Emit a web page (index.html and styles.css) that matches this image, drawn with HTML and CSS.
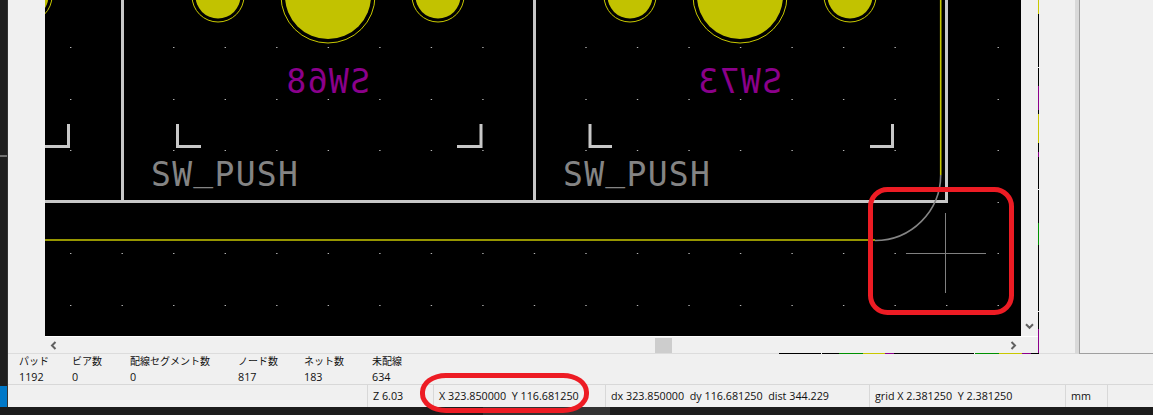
FILE: index.html
```html
<!DOCTYPE html>
<html lang="ja">
<head>
<meta charset="utf-8">
<title>PCB</title>
<link rel="stylesheet" href="styles.css">
</head>
<body>
<div class="app">
  <div class="main">
    <div class="rail">
      <div class="rail-top"></div>
      <div class="rail-line"></div>
      <div class="rail-fill"></div>
      <div class="rail-blue"></div>
    </div>
    <div class="content">
      <div class="top">
        <div class="work">
          <div class="work-main">
            <div class="gutter"></div>
            <div class="view">
              <div class="view-row">
                <svg class="canvas" viewBox="45 0 976 336" width="976" height="336" xmlns="http://www.w3.org/2000/svg">
                  <rect x="45" y="0" width="976" height="336" fill="#000"/>
                  <g class="dots">
                    <line x1="70" x2="1010" y1="47.5" y2="47.5"/>
                    <line x1="70" x2="1010" y1="99.5" y2="99.5"/>
                    <line x1="70" x2="1010" y1="150.5" y2="150.5"/>
                    <line x1="70" x2="1010" y1="202.5" y2="202.5"/>
                    <line x1="70" x2="1010" y1="253.5" y2="253.5"/>
                    <line x1="70" x2="1010" y1="305.5" y2="305.5"/>
                  </g>
                  <g class="pad">
                    <circle cx="26" cy="-4" r="22.5"/>
                    <circle cx="218" cy="-4" r="22.5"/>
                    <circle cx="328" cy="-4" r="43"/>
                    <circle cx="438" cy="-4" r="22.5"/>
                    <circle cx="630" cy="-4" r="22.5"/>
                    <circle cx="740" cy="-4" r="43"/>
                    <circle cx="850" cy="-4" r="22.5"/>
                  </g>
                  <g class="pad-ring">
                    <circle cx="26" cy="-4" r="26"/>
                    <circle cx="218" cy="-4" r="26"/>
                    <circle cx="328" cy="-4" r="47"/>
                    <circle cx="438" cy="-4" r="26"/>
                    <circle cx="630" cy="-4" r="26"/>
                    <circle cx="740" cy="-4" r="47"/>
                    <circle cx="850" cy="-4" r="26"/>
                  </g>
                  <g class="fab">
                    <path d="M122.5 0V201M534.5 0V201M946.5 0V201.5H45"/>
                    <path d="M45 146.5H68.5V124"/>
                    <path d="M177.5 124V146.5H201"/>
                    <path d="M457 146.5H481V124"/>
                    <path d="M590 124V146.5H612"/>
                    <path d="M870 146.5H892.5V124"/>
                  </g>
                  <path class="edge" d="M940.7 0V175M45 240H875"/>
                  <path class="arc" d="M940.7 175A65.7 65.7 0 0 1 875 240.5"/>
                  <text class="ref" transform="translate(370 93) scale(-1 1)">SW68</text>
                  <text class="ref" transform="translate(782 93) scale(-1 1)">SW73</text>
                  <text class="value" x="151" y="186">SW<tspan dy="-6">_</tspan><tspan dy="6">PUSH</tspan></text>
                  <text class="value" x="563" y="186">SW<tspan dy="-6">_</tspan><tspan dy="6">PUSH</tspan></text>
                  <path class="cross" d="M906 253.5H986M945.5 213V293"/>
                  <rect class="mark" x="870.5" y="189.5" width="141" height="123" rx="17" ry="17"/>
                </svg>
                <div class="vscroll">
                  <svg class="chev" viewBox="0 0 9 7" width="9" height="7"><path d="M1 1.2L4.5 4.8L8 1.2"/></svg>
                </div>
              </div>
              <div class="hscroll">
                <svg class="chev" viewBox="0 0 7 9" width="7" height="9"><path d="M5.5 1L2 4.5L5.5 8"/></svg>
                <div class="track"><div class="thumb"></div></div>
                <svg class="chev" viewBox="0 0 7 9" width="7" height="9"><path d="M1.5 1L5 4.5L1.5 8"/></svg>
              </div>
            </div>
            <div class="ticks">
              <i class="t-yellow t14"></i><i class="t-black t53"></i><i class="t-white t1"></i><i class="t-black t18"></i>
              <i class="t-purple t24"></i><i class="t-black t4"></i><i class="t-yellow t29"></i><i class="t-black t9"></i>
              <i class="t-purple t5"></i><i class="t-black t32"></i><i class="t-white t1"></i><i class="t-black t33"></i>
              <i class="t-green t22"></i><i class="t-black t66"></i><i class="t-white t1"></i><i class="t-black t17"></i>
              <i class="t-purple t24"></i>
            </div>
            <div class="gap"></div>
          </div>
          <div class="rule">
            <div class="rule-start"></div>
            <i class="s-black w42"></i><i class="s-white w1"></i><i class="s-black w17"></i><i class="s-green w24"></i>
            <i class="s-yellow w22"></i><i class="s-purple w9"></i><i class="s-black w80"></i><i class="s-white w1"></i>
            <i class="s-green w24"></i><i class="s-yellow w23"></i><i class="s-purple w9"></i><i class="s-black w8"></i>
          </div>
        </div>
        <div class="sash"></div>
        <div class="side"></div>
      </div>
      <div class="messages">
        <div class="msg w-pad"><span class="label">パッド</span><span class="num">1192</span></div>
        <div class="msg w-via"><span class="label">ビア数</span><span class="num">0</span></div>
        <div class="msg w-seg"><span class="label">配線セグメント数</span><span class="num">0</span></div>
        <div class="msg w-node"><span class="label">ノード数</span><span class="num">817</span></div>
        <div class="msg w-net"><span class="label">ネット数</span><span class="num">183</span></div>
        <div class="msg"><span class="label">未配線</span><span class="num">634</span></div>
      </div>
      <div class="status">
        <div class="cell c-blank"></div>
        <div class="cell c-zoom">Z 6.03</div>
        <div class="cell c-xy">X 323.850000&nbsp; Y 116.681250</div>
        <div class="cell c-dx">dx 323.850000&nbsp; dy 116.681250&nbsp; dist 344.229</div>
        <div class="cell c-grid">grid X 2.381250&nbsp; Y 2.381250</div>
        <div class="cell c-unit">mm</div>
      </div>
      <div class="callout"></div>
    </div>
  </div>
  <div class="taskbar">
    <div class="task-a"></div>
    <div class="task-b"></div>
  </div>
</div>
</body>
</html>
```
FILE: styles.css
```css
* { box-sizing: border-box; }
html, body { margin: 0; padding: 0; }
body {
  width: 1153px;
  height: 415px;
  overflow: hidden;
  background: #f0f0f0;
  font-family: "Open Sans", "Noto Sans CJK JP", sans-serif;
  font-size: 10.75px;
  color: #111;
}
.app { display: flex; flex-direction: column; height: 415px; }
.main { display: flex; height: 407px; }
.rail { width: 8px; display: flex; flex-direction: column; background: #1f1f1f; border-right: 1px solid #333; }
.rail-top { height: 155px; }
.rail-line { height: 2px; background: #707070; }
.rail-fill { flex: 1; }
.rail-blue { height: 21px; background: #0078c8; }
.content { flex: 1; display: flex; flex-direction: column; position: relative; }
.top { display: flex; height: 354px; }
.work { width: 1067px; display: flex; flex-direction: column; }
.work-main { display: flex; height: 353px; }
.gutter { width: 37px; }
.view { width: 993px; display: flex; flex-direction: column; }
.view-row { display: flex; height: 336px; }
.canvas { display: block; flex: none; }
.vscroll { width: 17px; display: flex; align-items: flex-end; justify-content: center; padding-bottom: 6px; }
.chev { display: block; flex: none; }
.chev path { fill: none; stroke: #606060; stroke-width: 2; }
.hscroll { height: 17px; display: flex; align-items: center; padding: 0 21px 0 5px; border-top: 1px solid #fff; }
.track { flex: 1; display: flex; padding-left: 598px; }
.thumb { width: 17px; height: 15px; background: #cdcdcd; }
.ticks { width: 1px; display: flex; flex-direction: column; }
.ticks i { display: block; flex: none; }
.gap { flex: 1; }
.t-yellow { background: #c8c800; }
.t-black { background: #000; }
.t-white { background: #f0f0f0; }
.t-purple { background: #8b008b; }
.t-green { background: #009000; }
.t1 { height: 1px; } .t4 { height: 4px; } .t5 { height: 5px; } .t9 { height: 9px; }
.t14 { height: 14px; } .t17 { height: 17px; } .t18 { height: 18px; } .t22 { height: 22px; }
.t24 { height: 24px; } .t29 { height: 29px; } .t32 { height: 32px; } .t33 { height: 33px; }
.t53 { height: 53px; } .t66 { height: 66px; }
.rule { display: flex; height: 1px; background: #dcdcdc; }
.rule-start { width: 771px; }
.rule i { display: block; height: 1px; flex: none; }
.s-black { background: #000; }
.s-white { background: #f0f0f0; }
.s-green { background: #009000; }
.s-yellow { background: #c8c800; }
.s-purple { background: #8b008b; }
.w1 { width: 1px; } .w8 { width: 8px; } .w9 { width: 9px; } .w17 { width: 17px; }
.w22 { width: 22px; } .w23 { width: 23px; } .w24 { width: 24px; } .w42 { width: 42px; } .w80 { width: 80px; }
.sash { width: 4px; background: #d9d9d9; }
.side { flex: 1; border-left: 1px solid #a0a0a0; border-bottom: 1px solid #a0a0a0; }

.dots line { stroke: #b4b4b4; stroke-width: 1; stroke-dasharray: 1.4 50.13; }
.pad circle { fill: #c2c200; }
.pad-ring circle { fill: none; stroke: #c8c800; stroke-width: 1; }
.fab path { fill: none; stroke: #c8c8c8; stroke-width: 3; }
.edge { fill: none; stroke: #c8c800; stroke-width: 1.6; }
.arc { fill: none; stroke: #848484; stroke-width: 1.6; }
.cross { fill: none; stroke: #808080; stroke-width: 1; }
.mark { fill: none; stroke: #ed1c24; stroke-width: 5; }
.ref { font-family: "DejaVu Sans Mono", monospace; font-size: 33px; letter-spacing: 1.4px; fill: #8b008b; }
.value { font-family: "DejaVu Sans Mono", monospace; font-size: 33px; letter-spacing: 1.3px; fill: #848484; }

.messages { display: flex; height: 30px; padding: 0 0 0 11px; }
.msg { display: flex; flex-direction: column; }
.label { font-size: 10px; line-height: 15px; }
.num { line-height: 17px; }
.w-pad { width: 53px; }
.w-via { width: 58px; }
.w-seg { width: 108px; }
.w-node { width: 66px; }
.w-net { width: 68px; }
.status { flex: 1; display: flex; border-top: 1px solid #d8d8d8; }
.cell { height: 100%; line-height: 22px; padding-left: 5px; border-right: 1px solid #d8d8d8; white-space: nowrap; }
.c-blank { width: 360px; }
.c-zoom { width: 66px; }
.c-xy { width: 172px; }
.c-dx { width: 264px; }
.c-grid { width: 196px; }
.c-unit { width: 42px; }
.callout {
  position: absolute;
  left: 412px;
  top: 373px;
  width: 169px;
  height: 40px;
  border: 5px solid #ed1c24;
  border-radius: 26px / 19px;
}
.taskbar { flex: 1; display: flex; background: #1c1c1c; }
.task-a { width: 483px; }
.task-b { width: 127px; background: #333; }
```
